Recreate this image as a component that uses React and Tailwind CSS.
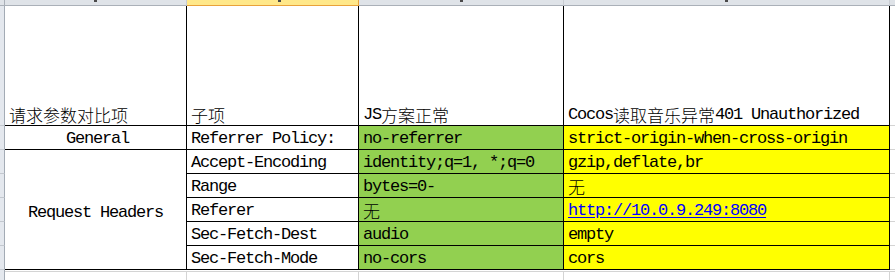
import React from 'react';

const cjk = "font-['Noto_Sans_CJK_SC',sans-serif] text-[17px] font-light tracking-normal";

// 单元格基础样式
const cell = 'flex items-end pl-[4px] pb-0 leading-[20px] border-r border-b border-black whitespace-nowrap overflow-hidden';
const gutter = 'bg-[#e4e8ee] border-r border-b border-r-[#a3abb5] border-b-[#c3c8cf]';
const extra = 'border-b border-[#d4d4d4]';

const rows = [
    { key: 'Accept-Encoding', js: 'identity;q=1, *;q=0', cocos: 'gzip,deflate,br' },
    { key: 'Range', js: 'bytes=0-', cocos: <span className={cjk}>无</span> },
    {
        key: 'Referer',
        js: <span className={cjk}>无</span>,
        cocos: <span className="text-[#0000ff] underline underline-offset-2">http://10.0.9.249:8080</span>
    },
    { key: 'Sec-Fetch-Dest', js: 'audio', cocos: 'empty' },
    { key: 'Sec-Fetch-Mode', js: 'no-cors', cocos: 'cors' }
];

export default function App() {
    return (
        <div className="w-[895px] h-[280px] bg-white overflow-hidden text-[17px] tracking-[-1.2px] text-black font-['Liberation_Mono','Noto_Sans_CJK_SC',monospace]">
            {/* 列标题条 */}
            <div className="grid grid-cols-[5px_182px_172px_205px_326px_1fr] h-[6px]">
                <div className="bg-[#dfe3e8] border-r border-b border-[#aab0b8]" />
                <div className="bg-[#dfe3e8] border-r border-b border-[#aab0b8] border-r-[#c8ccd2] flex justify-center items-end overflow-hidden">
                    <div className="w-[3px] h-[2px] bg-[#4a4a4a] mb-[3px]" />
                </div>
                <div className="bg-[#ffe88a] border-r border-b border-[#e9a23a] flex justify-center items-end overflow-hidden">
                    <div className="w-[3px] h-[2px] bg-[#4a4a4a] mb-[3px] ml-[14px]" />
                </div>
                <div className="bg-[#dfe3e8] border-r border-b border-[#aab0b8] border-r-[#c8ccd2] flex justify-center items-end overflow-hidden">
                    <div className="w-[3px] h-[2px] bg-[#4a4a4a] mb-[3px]" />
                </div>
                <div className="bg-[#dfe3e8] border-r border-b border-[#aab0b8] border-r-[#c8ccd2] flex justify-center items-end overflow-hidden">
                    <div className="w-[3px] h-[2px] bg-[#4a4a4a] mb-[3px]" />
                </div>
                <div className="bg-[#dfe3e8] border-b border-[#aab0b8]" />
            </div>

            <div className="grid grid-cols-[5px_182px_172px_205px_326px_1fr] grid-rows-[120px_24px_24px_24px_24px_24px_24px_1fr] h-[274px]">
                {/* 表头行 */}
                <div className={gutter} />
                <div className={cell}><span className={cjk}>请求参数对比项</span></div>
                <div className={cell}><span className={cjk}>子项</span></div>
                <div className={cell}>JS<span className={cjk}>方案正常</span></div>
                <div className={cell}>Cocos<span className={cjk}>读取音乐异常</span>401 Unauthorized</div>
                <div className={extra} />

                {/* General */}
                <div className={gutter} />
                <div className={`${cell} justify-center pl-0`}>General</div>
                <div className={cell}>Referrer Policy:</div>
                <div className={`${cell} bg-[#92d050]`}>no-referrer</div>
                <div className={`${cell} bg-[#ffff00]`}>strict-origin-when-cross-origin</div>
                <div className={extra} />

                {/* Request Headers */}
                <div className={`${gutter} row-start-3`} />
                <div className="row-start-3 row-span-5 col-start-2 flex items-center justify-center border-r border-b border-black pt-[6px]">
                    Request Headers
                </div>
                {rows.map((r, i) => (
                    <React.Fragment key={r.key}>
                        {i > 0 && <div className={`${gutter} col-start-1`} />}
                        <div className={`${cell} col-start-3`}>{r.key}</div>
                        <div className={`${cell} bg-[#92d050]`}>{r.js}</div>
                        <div className={`${cell} bg-[#ffff00]`}>{r.cocos}</div>
                        <div className={extra} />
                    </React.Fragment>
                ))}

                {/* 下方空白格 */}
                <div className="bg-[#e4e8ee] border-r border-[#a3abb5]" />
                <div className="mt-[1px] border-t border-r border-[#d4d4d4]" />
                <div className="mt-[1px] border-t border-r border-[#d4d4d4]" />
                <div className="mt-[1px] border-t border-r border-[#d4d4d4]" />
                <div className="mt-[1px] border-t border-r border-[#d4d4d4]" />
                <div className="mt-[1px] border-t border-[#d4d4d4]" />
            </div>
        </div>
    );
}
